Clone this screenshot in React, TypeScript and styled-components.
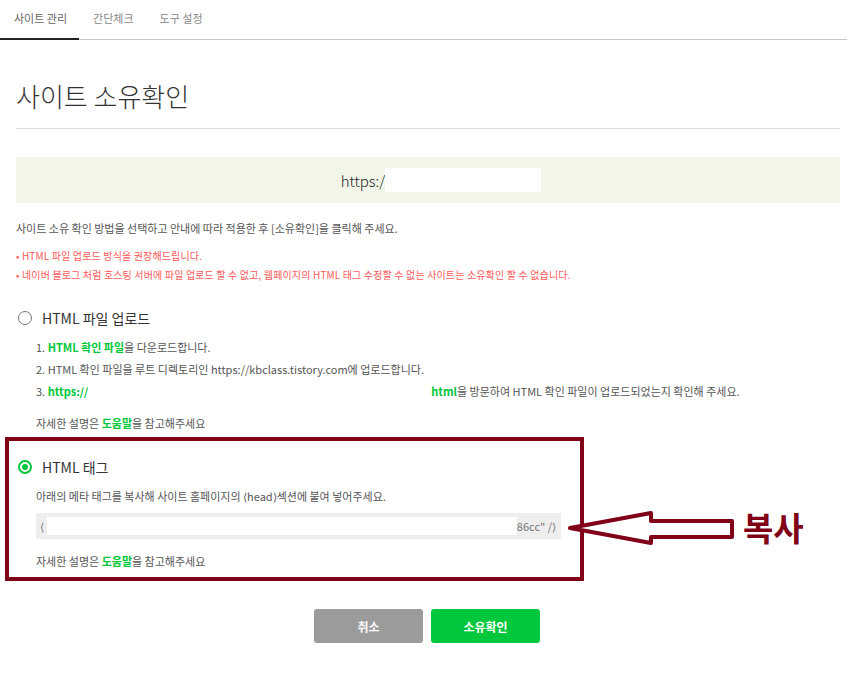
import React from "react";
import styled, { createGlobalStyle } from "styled-components";

const GlobalStyle = createGlobalStyle`
  html, body {
    margin: 0;
    padding: 0;
    background: #fff;
  }
  body {
    font-family: "Noto Sans CJK KR", "Noto Sans", sans-serif;
    color: #333;
  }
`;

const MAROON = "#800018";
const GREEN = "#00c73c";

const Page = styled.div`
  width: 847px;
  min-height: 678px;
`;

const TabBar = styled.nav`
  display: flex;
  height: 39px;
  border-bottom: 1px solid #c8c8c8;
`;

const Tab = styled.div<{ $active?: boolean }>`
  position: relative;
  display: flex;
  align-items: center;
  padding: 0 12px 3px 14px;
  font-size: 11px;
  color: ${(p) => (p.$active ? "#666" : "#888")};
  &::after {
    content: "";
    display: ${(p) => (p.$active ? "block" : "none")};
    position: absolute;
    left: 0;
    right: 0;
    bottom: -1px;
    height: 2px;
    background: #222;
  }
`;

const Content = styled.main`
  padding: 0 7px 0 16px;
`;

const Title = styled.h1`
  margin: 38px 0 0;
  font-size: 26px;
  line-height: 36px;
  font-weight: 300;
  color: #333;
`;

const Divider = styled.hr`
  margin: 14px 0 0;
  border: 0;
  border-top: 1px solid #dcdcdc;
`;

const UrlBox = styled.div`
  margin-top: 28px;
  height: 46px;
  background: #f1f6e9;
  display: flex;
  align-items: center;
  justify-content: center;
  padding-left: 26px;
  font-size: 15px;
  font-weight: 300;
  color: #222;
`;

const Masked = styled.span<{ $w: number; $h: number }>`
  display: inline-block;
  vertical-align: middle;
  width: ${(p) => p.$w}px;
  height: ${(p) => p.$h}px;
  background: #fff;
`;

const Desc = styled.p`
  margin: 16px 0 0;
  font-size: 11px;
  line-height: 18px;
  color: #555;
`;

const Notes = styled.ul`
  margin: 9px 0 0;
  padding: 0;
  list-style: none;
  font-size: 10px;
  line-height: 19px;
  letter-spacing: 0.15px;
  color: #ff5858;
`;

const Option = styled.section`
  margin-top: 24px;
`;

const Boxed = styled.section`
  position: relative;
  margin: 4px 0 0 -11px;
  width: 564px;
  padding: 16px 0 6px 7px;
  border: 4px solid ${MAROON};
`;

const RadioRow = styled.label`
  display: flex;
  align-items: center;
  height: 20px;
  gap: 10px;
  font-size: 14px;
  color: #333;
`;

const Radio = styled.span<{ $checked?: boolean }>`
  box-sizing: border-box;
  width: 14px;
  height: 14px;
  margin-left: 2px;
  border-radius: 50%;
  border: ${(p) => (p.$checked ? `2px solid ${GREEN}` : "1.5px solid #777")};
  display: flex;
  align-items: center;
  justify-content: center;
  &::after {
    content: "";
    display: ${(p) => (p.$checked ? "block" : "none")};
    width: 6px;
    height: 6px;
    border-radius: 50%;
    background: ${GREEN};
  }
`;

const Steps = styled.ol`
  margin: 8px 0 0;
  padding: 0 0 0 20px;
  list-style: none;
  font-size: 11px;
  line-height: 22px;
  color: #555;
`;

const Em = styled.span`
  color: ${GREEN};
  font-weight: 700;
`;

const Help = styled.p<{ $top: number }>`
  margin: ${(p) => p.$top}px 0 0 20px;
  font-size: 11px;
  line-height: 20px;
  color: #555;
`;

const Indented = styled(Desc)`
  margin: 10px 0 0 20px;
`;

const CodeBox = styled.div`
  margin: 8px 0 0 20px;
  width: 525px;
  height: 26px;
  box-sizing: border-box;
  padding: 0 5px 0 4px;
  background: #eee;
  display: flex;
  align-items: center;
  font-size: 11px;
  color: #777;
  white-space: nowrap;
`;

const CodeMask = styled.span`
  flex: 1;
  height: 18px;
  margin-left: 3px;
  background: #fff;
`;

const Callout = styled.div`
  position: absolute;
  left: 559px;
  top: 65px;
  display: flex;
  align-items: center;
  gap: 7px;
  white-space: nowrap;
`;

const CalloutText = styled.span`
  font-size: 33px;
  font-weight: 700;
  color: ${MAROON};
  line-height: 42px;
`;

const Actions = styled.div`
  display: flex;
  justify-content: center;
  gap: 8px;
  margin-top: 28px;
  padding-right: 2px;
`;

const Button = styled.button<{ $primary?: boolean }>`
  width: 109px;
  height: 34px;
  border: 0;
  border-radius: 3px;
  background: ${(p) => (p.$primary ? GREEN : "#9b9b9b")};
  color: #fff;
  font-family: inherit;
  font-size: 12px;
  font-weight: 700;
`;

const Arrow = () => (
  <svg width="168" height="42" viewBox="0 0 168 42">
    <path
      d="M2 22 L83 7 L83 15 L164 15 L164 31 L83 31 L83 37 Z"
      fill="#fff"
      stroke={MAROON}
      strokeWidth="4"
      strokeLinejoin="round"
    />
  </svg>
);

export default function App() {
  return (
    <Page>
      <GlobalStyle />
      <TabBar>
        <Tab $active>사이트 관리</Tab>
        <Tab>간단체크</Tab>
        <Tab>도구 설정</Tab>
      </TabBar>
      <Content>
        <Title>사이트 소유확인</Title>
        <Divider />
        <UrlBox>
          https:/
          <Masked $w={156} $h={24} />
        </UrlBox>
        <Desc>사이트 소유 확인 방법을 선택하고 안내에 따라 적용한 후 [소유확인]을 클릭해 주세요.</Desc>
        <Notes>
          <li>• HTML 파일 업로드 방식을 권장해드립니다.</li>
          <li>• 네이버 블로그 처럼 호스팅 서버에 파일 업로드 할 수 없고, 웹페이지의 HTML 태그 수정할 수 없는 사이트는 소유확인 할 수 없습니다.</li>
        </Notes>

        <Option>
          <RadioRow>
            <Radio />
            HTML 파일 업로드
          </RadioRow>
          <Steps>
            <li>
              1. <Em>HTML 확인 파일</Em>을 다운로드합니다.
            </li>
            <li>2. HTML 확인 파일을 루트 디렉토리인 https://kbclass.tistory.com에 업로드합니다.</li>
            <li>
              3. <Em>https://</Em>
              <Masked $w={343} $h={14} />
              <Em>html</Em>을 방문하여 HTML 확인 파일이 업로드되었는지 확인해 주세요.
            </li>
          </Steps>
          <Help $top={11}>
            자세한 설명은 <Em>도움말</Em>을 참고해주세요
          </Help>
        </Option>

        <Boxed>
          <RadioRow>
            <Radio $checked />
            HTML 태그
          </RadioRow>
          <Indented>아래의 메타 태그를 복사해 사이트 홈페이지의 ⟨head⟩섹션에 붙여 넣어주세요.</Indented>
          <CodeBox>
            ⟨
            <CodeMask />
            86cc" /⟩
          </CodeBox>
          <Help $top={12}>
            자세한 설명은 <Em>도움말</Em>을 참고해주세요
          </Help>
          <Callout>
            <Arrow />
            <CalloutText>복사</CalloutText>
          </Callout>
        </Boxed>

        <Actions>
          <Button>취소</Button>
          <Button $primary>소유확인</Button>
        </Actions>
      </Content>
    </Page>
  );
}
